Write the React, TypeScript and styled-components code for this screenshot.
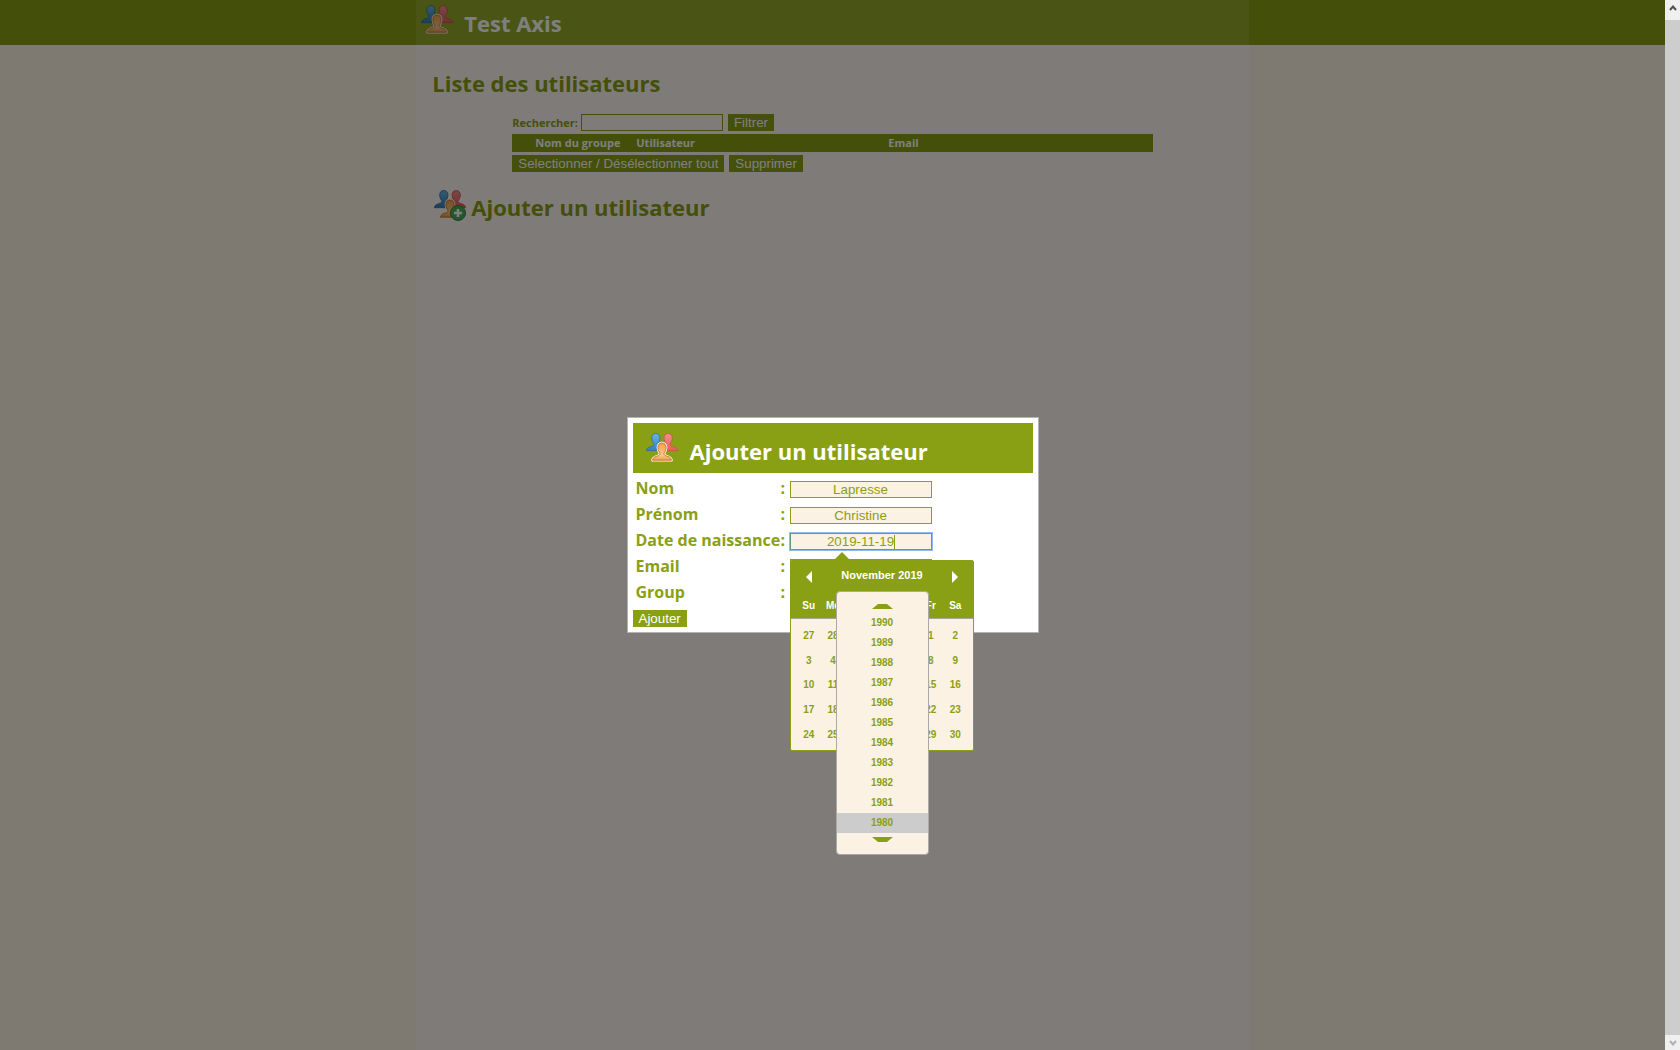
import React, { useState } from "react";
import styled, { createGlobalStyle } from "styled-components";

const green = "#8aa014";
const cream = "#fcf2e3";
const sans = `"Open Sans", "Noto Sans", sans-serif`;
const arial = `"Liberation Sans", Arial, sans-serif`;

const GlobalStyle = createGlobalStyle`
  *, *::before, *::after { box-sizing: border-box; }
  body { margin: 0; background: ${cream}; font-family: ${sans}; color: ${green}; overflow: hidden; }
  h1, h2, p { margin: 0; }
`;

const Window = styled.div`
  display: grid;
  grid-template-columns: minmax(0, 1fr) 15px;
  height: 100vh;
`;

const Viewport = styled.div`
  position: relative;
  display: flex;
  flex-direction: column;
  background: #fcf2e3;
`;

const TopBar = styled.header`
  background: #88a012;
  flex: 0 0 45px;
`;

const BarInner = styled.div`
  display: flex;
  align-items: center;
  gap: 11px;
  width: 50%;
  height: 45px;
  margin: 0 auto;
  padding: 0 5px;
  background: #94aa2a;
  svg { margin-bottom: 6px; }
`;

const Title = styled.h1`
  font-size: 22px;
  line-height: 28px;
  color: #fff;
`;

const Main = styled.main`
  flex: 1;
  width: 50%;
  margin: 0 auto;
  padding: 23px 16px;
  background: #fff7f0;
`;

const SectionTitle = styled.h2`
  display: flex;
  align-items: center;
  gap: 5px;
  font-size: 22px;
  line-height: 30px;
  color: #88a012;
  svg { margin-left: 2px; }
  span { padding-top: 4px; }
`;

const ListBlock = styled.section`
  display: flex;
  flex-direction: column;
  gap: 3px;
  width: 80%;
  margin: 16px auto;
`;

const Line = styled.div`
  display: flex;
  align-items: center;
  gap: 5px;
  height: 17px;
`;

const SearchLabel = styled.label`
  font-size: 11px;
  font-weight: 700;
  line-height: 17px;
  margin-right: -2px;
`;

const TextInput = styled.input`
  width: 142px;
  height: 17px;
  margin: 0;
  padding: 0 2px;
  border: 1px solid ${green};
  border-radius: 0;
  background: ${cream};
  color: ${green};
  font-family: ${arial};
  text-align: center;
  outline: 0;
`;

const SearchInput = styled(TextInput)`
  background: transparent;
`;

const DateInput = styled(TextInput)`
  border-color: #6a9a72;
  box-shadow: 0 0 0 1px #8fbcf5;
`;

const Button = styled.button`
  height: 17px;
  padding: 0 6px;
  border: 0;
  background: ${green};
  color: #fff;
  font-family: ${arial};
  line-height: 17px;
  white-space: nowrap;
  cursor: pointer;
`;

const UserTable = styled.table`
  width: 100%;
  border-collapse: collapse;
  table-layout: fixed;
  background: #88a012;
  color: #fff;
  font-size: 11px;
  line-height: 18px;
  th { padding: 0; font-weight: 700; text-align: center; }
  th.left { text-align: left; padding-left: 5px; }
`;

const Overlay = styled.div`
  position: absolute;
  inset: 0;
  display: flex;
  align-items: center;
  justify-content: center;
  background: rgba(0, 0, 0, 0.5);
`;

const Dialog = styled.div`
  width: 412px;
  padding: 5px;
  border: 1px solid #b3b3b3;
  background: #fff;
`;

const DialogHead = styled.header`
  display: flex;
  align-items: center;
  gap: 12px;
  height: 50px;
  padding: 0 13px;
  background: ${green};
  h2 { font-size: 22px; line-height: 30px; color: #fff; padding-top: 6px; }
`;

const Form = styled.form`
  display: flex;
  flex-direction: column;
  align-items: flex-start;
  padding-top: 2px;
`;

const Fields = styled.div`
  display: grid;
  grid-template-columns: 145px 7px 1fr;
  grid-auto-rows: 26px;
  width: 100%;
  padding: 0 3px;
  margin-bottom: 5px;
`;

const Label = styled.label`
  font-size: 16px;
  font-weight: 700;
  line-height: 26px;
  white-space: nowrap;
`;

const Colon = styled.span`
  font-size: 16px;
  font-weight: 700;
  line-height: 26px;
`;

const Cell = styled.div`
  position: relative;
  display: flex;
  align-items: center;
  padding: 6px 0 3px 2px;
`;

const Caret = styled.i`
  position: absolute;
  left: 106px;
  top: 8px;
  width: 1px;
  height: 14px;
  background: ${green};
`;

const Select = styled.select`
  width: 142px;
  height: 17px;
  border: 1px solid ${green};
  background: ${cream};
  color: ${green};
  font-family: ${arial};
`;

const Picker = styled.div`
  position: absolute;
  z-index: 5;
  top: 33px;
  left: 2px;
  width: 184px;
  border: 1px solid ${green};
  border-radius: 2px;
  background: ${cream};
  color: ${green};
  font-family: ${arial};
  font-weight: 700;
  &::before {
    content: "";
    position: absolute;
    top: -9px;
    left: 43px;
    border: solid transparent;
    border-width: 0 8px 8px;
    border-bottom-color: ${green};
  }
`;

const PickerHead = styled.div`
  background: ${green};
  color: #fff;
  height: 58px;
  padding: 0 5px 0 6px;
  border-bottom: 1px solid #a3a99a;
`;

const MonthRow = styled.div`
  display: flex;
  align-items: center;
  justify-content: space-between;
  height: 32px;
  padding: 0 7px;
`;

const MonthTitle = styled.strong`
  font-size: 11px;
  line-height: 14px;
  padding-bottom: 5px;
`;

const ArrowButton = styled.button`
  display: flex;
  width: 10px;
  padding: 0;
  border: 0;
  background: none;
  justify-content: center;
`;

const Week = styled.div`
  display: grid;
  grid-template-columns: repeat(7, 1fr);
  font-size: 10px;
  line-height: 26px;
  text-align: center;
`;

const Days = styled(Week)`
  height: 131px;
  padding: 5px 5px 3px 6px;
  line-height: 24px;
`;

const Day = styled.button`
  border: 0;
  padding: 0;
  background: none;
  color: inherit;
  font: inherit;
`;

const YearMenu = styled.div`
  position: absolute;
  top: 30px;
  left: 45px;
  display: flex;
  flex-direction: column;
  width: 93px;
  padding: 0 0 12px;
  border: 1px solid #a9a9a9;
  border-radius: 4px;
  background: ${cream};
`;

const YearStep = styled.button<{ $up?: boolean }>`
  display: flex;
  align-items: flex-end;
  justify-content: center;
  height: ${(p) => (p.$up ? 21 : 9)}px;
  padding: ${(p) => (p.$up ? "0 0 4px" : "0")};
  border: 0;
  background: none;
`;

const Year = styled.button<{ $on: boolean }>`
  height: 20px;
  padding: 0;
  border: 0;
  background: ${(p) => (p.$on ? "#cccccc" : "transparent")};
  color: ${green};
  font: 700 10px/20px ${arial};
`;

const ScrollTrack = styled.div`
  display: flex;
  flex-direction: column;
  background: #cdcdcd;
  justify-content: space-between;
`;

const ScrollEnd = styled.button<{ $tall?: boolean }>`
  display: flex;
  align-items: center;
  justify-content: center;
  height: ${(p) => (p.$tall ? 20 : 15)}px;
  padding: ${(p) => (p.$tall ? "0 0 4px" : "0")};
  border: 0;
  background: #f0f0f0;
`;

const bust =
  "M10 1c2.700 0 4.200 2 4.100 4.700-.1 2.400-.9 4-1.900 5.100-.5 1.500 0 2.400 1.400 2.900 2.600.8 5.400 1.300 5.900 4.500H.5c.5-3.200 3.300-3.700 5.900-4.500 1.400-.5 1.900-1.400 1.400-2.900-1-1.100-1.800-2.700-1.900-5.100C5.800 3 7.300 1 10 1z";

const UsersIcon = ({ id, plus }: { id: string; plus?: boolean }) => (
  <svg width="32" height="32" viewBox="0 0 32 32" aria-hidden="true">
    <defs>
      <linearGradient id={`${id}b`} x2="0" y2="1">
        <stop stopColor="#6cb4df" />
        <stop offset="1" stopColor="#3580bb" />
      </linearGradient>
      <linearGradient id={`${id}r`} x2="0" y2="1">
        <stop stopColor="#f29088" />
        <stop offset="1" stopColor="#e85d60" />
      </linearGradient>
      <linearGradient id={`${id}o`} x2="0" y2="1">
        <stop stopColor="#f0a04a" />
        <stop offset="0.7" stopColor="#fac98c" />
        <stop offset="1" stopColor="#ed9a45" />
      </linearGradient>
    </defs>
    <path d={bust} transform="translate(12.200 .5)" fill={`url(#${id}r)`} stroke="#c94f52" strokeWidth="0.8" />
    <path d={bust} transform="translate(-.2 .5)" fill={`url(#${id}b)`} stroke="#2e6c9e" strokeWidth="0.8" />
    <g transform="translate(6 10)">
      <path d={bust} fill="#fff" stroke="#fff" strokeWidth="2.600" strokeLinejoin="round" />
      <path d={bust} fill={`url(#${id}o)`} stroke="#cf7423" strokeWidth="1" />
    </g>
    {plus && (
      <g>
        <circle cx="24" cy="24" r="7.500" fill="#4cae55" stroke="#2f8440" />
        <path d="M24 20v8M20 24h8" stroke="#fff" strokeWidth="2.600" />
      </g>
    )}
  </svg>
);

const weekdays = ["Su", "Mo", "Tu", "We", "Th", "Fr", "Sa"];
const days = [27, 28, 29, 30, 31, ...Array.from({ length: 30 }, (_, i) => i + 1)];
const years = Array.from({ length: 11 }, (_, i) => 1990 - i);

const DatePicker = () => {
  const [year, setYear] = useState(1980);
  return (
    <Picker>
      <PickerHead>
        <MonthRow>
          <ArrowButton type="button" aria-label="Previous month">
            <svg width="6" height="12"><path d="M6 0v12L0 6z" fill="#fff" /></svg>
          </ArrowButton>
          <MonthTitle>November 2019</MonthTitle>
          <ArrowButton type="button" aria-label="Next month">
            <svg width="6" height="12"><path d="M0 0v12l6-6z" fill="#fff" /></svg>
          </ArrowButton>
        </MonthRow>
        <Week>{weekdays.map((d) => <span key={d}>{d}</span>)}</Week>
      </PickerHead>
      <Days>{days.map((d, i) => <Day type="button" key={i}>{d}</Day>)}</Days>
      <YearMenu>
        <YearStep $up type="button" aria-label="Later years">
          <svg width="21" height="5"><path d="M0 5 6 0h9l6 5z" fill={green} /></svg>
        </YearStep>
        {years.map((y) => (
          <Year type="button" key={y} $on={y === year} onClick={() => setYear(y)}>{y}</Year>
        ))}
        <YearStep type="button" aria-label="Earlier years">
          <svg width="21" height="5"><path d="M0 0h21l-6 5H6z" fill={green} /></svg>
        </YearStep>
      </YearMenu>
    </Picker>
  );
};

export default function App() {
  return (
    <Window>
      <GlobalStyle />
      <Viewport>
        <TopBar>
          <BarInner>
            <UsersIcon id="top" />
            <Title>Test Axis</Title>
          </BarInner>
        </TopBar>
        <Main>
          <SectionTitle>Liste des utilisateurs</SectionTitle>
          <ListBlock>
            <Line>
              <SearchLabel htmlFor="search">Rechercher:</SearchLabel>
              <SearchInput id="search" type="text" />
              <Button type="button">Filtrer</Button>
            </Line>
            <UserTable>
              <colgroup>
                <col style={{ width: 18 }} />
                <col style={{ width: 101 }} />
                <col style={{ width: 150 }} />
                <col />
                <col style={{ width: 127 }} />
              </colgroup>
              <thead>
                <tr>
                  <th />
                  <th className="left">Nom du groupe</th>
                  <th className="left">Utilisateur</th>
                  <th>Email</th>
                  <th />
                </tr>
              </thead>
            </UserTable>
            <Line>
              <Button type="button">Selectionner / Désélectionner tout</Button>
              <Button type="button">Supprimer</Button>
            </Line>
          </ListBlock>
          <SectionTitle>
            <UsersIcon id="add" plus />
            <span>Ajouter un utilisateur</span>
          </SectionTitle>
        </Main>
        <Overlay>
          <Dialog role="dialog" aria-labelledby="dialog-title">
            <DialogHead>
              <UsersIcon id="dlg" />
              <h2 id="dialog-title">Ajouter un utilisateur</h2>
            </DialogHead>
            <Form>
              <Fields>
                <Label htmlFor="nom">Nom</Label>
                <Colon>:</Colon>
                <Cell><TextInput id="nom" defaultValue="Lapresse" /></Cell>
                <Label htmlFor="prenom">Prénom</Label>
                <Colon>:</Colon>
                <Cell><TextInput id="prenom" defaultValue="Christine" /></Cell>
                <Label htmlFor="naissance">Date de naissance</Label>
                <Colon>:</Colon>
                <Cell>
                  <DateInput id="naissance" defaultValue="2019-11-19" />
                  <Caret />
                  <DatePicker />
                </Cell>
                <Label htmlFor="email">Email</Label>
                <Colon>:</Colon>
                <Cell><TextInput id="email" /></Cell>
                <Label htmlFor="group">Group</Label>
                <Colon>:</Colon>
                <Cell><Select id="group" /></Cell>
              </Fields>
              <Button type="button">Ajouter</Button>
            </Form>
          </Dialog>
        </Overlay>
      </Viewport>
      <ScrollTrack>
        <ScrollEnd $tall type="button" aria-label="Scroll up">
          <svg width="8" height="6"><path d="M1 5 4 1.500 7 5" fill="none" stroke="#505050" strokeWidth="2" /></svg>
        </ScrollEnd>
        <ScrollEnd type="button" aria-label="Scroll down">
          <svg width="8" height="6"><path d="M1 1 4 4.500 7 1" fill="none" stroke="#b0b0b0" strokeWidth="2" /></svg>
        </ScrollEnd>
      </ScrollTrack>
    </Window>
  );
}
